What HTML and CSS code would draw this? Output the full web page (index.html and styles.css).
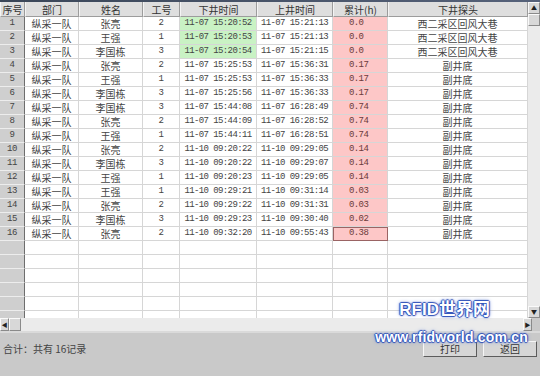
FILE: index.html
```html
<!DOCTYPE html>
<html lang="zh-CN">
<head>
    <meta charset="UTF-8">
    <title>下井记录查询</title>
    <link rel="stylesheet" href="styles.css">
</head>
<body>
<div class="window">
    <div class="title-edge"></div>

    <div class="grid-area">
        <div class="grid-view">
            <table class="record-table">
                <colgroup>
                    <col style="width:25px">
                    <col style="width:54px">
                    <col style="width:64px">
                    <col style="width:37px">
                    <col style="width:77px">
                    <col style="width:76px">
                    <col style="width:55px">
                    <col style="width:140px">
                </colgroup>
                <thead>
                    <tr>
                        <th>序号</th>
                        <th>部门</th>
                        <th>姓名</th>
                        <th>工号</th>
                        <th>下井时间</th>
                        <th>上井时间</th>
                        <th>累计(h)</th>
                        <th>下井探头</th>
                    </tr>
                </thead>
                <tbody>
                    <tr><td class="row-no">1</td><td>纵采一队</td><td>张亮</td><td class="num">2</td><td class="num time-in">11-07 15:20:52</td><td class="num">11-07 15:21:13</td><td class="num total">0.0</td><td>西二采区回风大巷</td></tr>
                    <tr><td class="row-no">2</td><td>纵采一队</td><td>王强</td><td class="num">1</td><td class="num time-in">11-07 15:20:53</td><td class="num">11-07 15:21:13</td><td class="num total">0.0</td><td>西二采区回风大巷</td></tr>
                    <tr><td class="row-no">3</td><td>纵采一队</td><td>李国栋</td><td class="num">3</td><td class="num time-in">11-07 15:20:54</td><td class="num">11-07 15:21:15</td><td class="num total">0.0</td><td>西二采区回风大巷</td></tr>
                    <tr><td class="row-no">4</td><td>纵采一队</td><td>张亮</td><td class="num">2</td><td class="num">11-07 15:25:53</td><td class="num">11-07 15:36:31</td><td class="num total">0.17</td><td>副井底</td></tr>
                    <tr><td class="row-no">5</td><td>纵采一队</td><td>王强</td><td class="num">1</td><td class="num">11-07 15:25:53</td><td class="num">11-07 15:36:33</td><td class="num total">0.17</td><td>副井底</td></tr>
                    <tr><td class="row-no">6</td><td>纵采一队</td><td>李国栋</td><td class="num">3</td><td class="num">11-07 15:25:56</td><td class="num">11-07 15:36:33</td><td class="num total">0.17</td><td>副井底</td></tr>
                    <tr><td class="row-no">7</td><td>纵采一队</td><td>李国栋</td><td class="num">3</td><td class="num">11-07 15:44:08</td><td class="num">11-07 16:28:49</td><td class="num total">0.74</td><td>副井底</td></tr>
                    <tr><td class="row-no">8</td><td>纵采一队</td><td>张亮</td><td class="num">2</td><td class="num">11-07 15:44:09</td><td class="num">11-07 16:28:52</td><td class="num total">0.74</td><td>副井底</td></tr>
                    <tr><td class="row-no">9</td><td>纵采一队</td><td>王强</td><td class="num">1</td><td class="num">11-07 15:44:11</td><td class="num">11-07 16:28:51</td><td class="num total">0.74</td><td>副井底</td></tr>
                    <tr><td class="row-no">10</td><td>纵采一队</td><td>张亮</td><td class="num">2</td><td class="num">11-10 09:20:22</td><td class="num">11-10 09:29:05</td><td class="num total">0.14</td><td>副井底</td></tr>
                    <tr><td class="row-no">11</td><td>纵采一队</td><td>李国栋</td><td class="num">3</td><td class="num">11-10 09:20:22</td><td class="num">11-10 09:29:07</td><td class="num total">0.14</td><td>副井底</td></tr>
                    <tr><td class="row-no">12</td><td>纵采一队</td><td>王强</td><td class="num">1</td><td class="num">11-10 09:20:23</td><td class="num">11-10 09:29:05</td><td class="num total">0.14</td><td>副井底</td></tr>
                    <tr><td class="row-no">13</td><td>纵采一队</td><td>王强</td><td class="num">1</td><td class="num">11-10 09:29:21</td><td class="num">11-10 09:31:14</td><td class="num total">0.03</td><td>副井底</td></tr>
                    <tr><td class="row-no">14</td><td>纵采一队</td><td>张亮</td><td class="num">2</td><td class="num">11-10 09:29:22</td><td class="num">11-10 09:31:31</td><td class="num total">0.03</td><td>副井底</td></tr>
                    <tr><td class="row-no">15</td><td>纵采一队</td><td>李国栋</td><td class="num">3</td><td class="num">11-10 09:29:23</td><td class="num">11-10 09:30:40</td><td class="num total">0.02</td><td>副井底</td></tr>
                    <tr><td class="row-no">16</td><td>纵采一队</td><td>张亮</td><td class="num">2</td><td class="num">11-10 09:32:20</td><td class="num">11-10 09:55:43</td><td class="num total current">0.38</td><td>副井底</td></tr>
                    <tr><td class="row-no"></td><td></td><td></td><td></td><td></td><td></td><td></td><td></td></tr>
                    <tr><td class="row-no"></td><td></td><td></td><td></td><td></td><td></td><td></td><td></td></tr>
                    <tr><td class="row-no"></td><td></td><td></td><td></td><td></td><td></td><td></td><td></td></tr>
                    <tr><td class="row-no"></td><td></td><td></td><td></td><td></td><td></td><td></td><td></td></tr>
                    <tr><td class="row-no"></td><td></td><td></td><td></td><td></td><td></td><td></td><td></td></tr>
                    <tr><td class="row-no"></td><td></td><td></td><td></td><td></td><td></td><td></td><td></td></tr>
                </tbody>
            </table>
        </div>

        <!-- vertical scrollbar -->
        <div class="vscroll">
            <div class="sb-btn">&#9650;</div>
            <div class="sb-thumb"></div>
            <div class="sb-track"></div>
            <div class="sb-btn">&#9660;</div>
        </div>
    </div>

    <!-- horizontal scrollbar -->
    <div class="hscroll">
        <div class="sb-btn">&#9664;</div>
        <div class="sb-thumb"></div>
        <div class="sb-track"></div>
        <div class="sb-btn">&#9654;</div>
        <div class="sb-corner"></div>
    </div>

    <div class="footer">
        <span class="summary">合计：共有 16记录</span>
        <button class="action-btn print-btn">打印</button>
        <button class="action-btn">返回</button>
    </div>

    <div class="watermark">
        <span class="wm-logo">RFID世界网</span>
        <span class="wm-url">www.rfidworld.com.cn</span>
    </div>
</div>
</body>
</html>
```

FILE: styles.css
```css
/* Global */
body {
    margin: 0;
    padding: 0;
    background-color: #c9c9c9;
    font-family: "Noto Sans CJK SC", "Liberation Sans", sans-serif;
    font-size: 10px;
    color: #444;
}

.window {
    position: relative;
    width: 540px;
    height: 376px;
    overflow: hidden;
    background-color: #c9c9c9;
}

.title-edge {
    height: 2px;
    background: linear-gradient(to right, #3a4658, #56627a);
}

/* Grid */
.grid-area {
    display: flex;
    height: 316px;
}

.grid-view {
    width: 528px;
    overflow: hidden;
    background-color: #fff;
}

.record-table {
    width: 528px;
    table-layout: fixed;
    border-collapse: separate;
    border-spacing: 0;
}

.record-table th {
    box-sizing: border-box;
    height: 15px;
    padding: 0;
    font-weight: normal;
    line-height: 13px;
    text-align: center;
    color: #333;
    background-color: #dedede;
    border-left: 1px solid #f4f4f4;
    border-right: 1px solid #9c9c9c;
    border-bottom: 1px solid #9c9c9c;
    white-space: nowrap;
    overflow: hidden;
}

.record-table td {
    box-sizing: border-box;
    height: 14px;
    padding: 0;
    line-height: 13px;
    text-align: center;
    border-right: 1px solid #d6d6d6;
    border-bottom: 1px solid #d6d6d6;
    white-space: nowrap;
    overflow: hidden;
}

.record-table td.num {
    font-family: "Liberation Mono", monospace;
    font-size: 9px;
    letter-spacing: -0.6px;
}

.record-table td.row-no {
    font-family: "Liberation Mono", monospace;
    font-size: 9px;
    letter-spacing: -0.5px;
    background-color: #cfcfcf;
    border-bottom: 1px solid #ededed;
    border-right: 1px solid #6e6e6e;
}

.record-table td.time-in {
    background-color: #c9f2c4;
}

.record-table td.total {
    text-align: left;
    padding-left: 16px;
    background-color: #fdc7c7;
    color: #6a3a3a;
}

.record-table td.current {
    outline: 1px solid #9a6464;
    outline-offset: -1px;
}

/* Scrollbars */
.vscroll {
    width: 12px;
    display: flex;
    flex-direction: column;
    background-color: #e9e9e9;
}

.sb-btn {
    box-sizing: border-box;
    width: 12px;
    height: 12px;
    font-size: 6px;
    line-height: 10px;
    text-align: center;
    color: #222;
    background-color: #d8d8d8;
    border: 1px solid;
    border-color: #fafafa #8a8a8a #8a8a8a #fafafa;
}

.vscroll .sb-thumb {
    height: 12px;
    box-sizing: border-box;
    background-color: #d8d8d8;
    border: 1px solid;
    border-color: #fafafa #8a8a8a #8a8a8a #fafafa;
}

.sb-track {
    flex: 1;
    background-color: #ebebeb;
}

.hscroll {
    display: flex;
    height: 13px;
    background-color: #ebebeb;
}

.hscroll .sb-btn {
    width: 9px;
    height: 13px;
    line-height: 11px;
}

.hscroll .sb-thumb {
    width: 12px;
    box-sizing: border-box;
    background-color: #d8d8d8;
    border: 1px solid;
    border-color: #fafafa #8a8a8a #8a8a8a #fafafa;
}

.sb-corner {
    width: 8px;
    background-color: #c9c9c9;
}

/* Footer */
.footer {
    display: flex;
    align-items: flex-start;
    height: 45px;
    padding: 8px 3px 0 3px;
    box-sizing: border-box;
    border-top: 2px solid #dadada;
}

.summary {
    line-height: 15px;
}

.action-btn {
    box-sizing: border-box;
    width: 54px;
    height: 16px;
    margin-left: 6px;
    padding: 0;
    font-family: "Noto Sans CJK SC", sans-serif;
    font-size: 10px;
    line-height: 12px;
    color: #333;
    background-color: #d6d6d6;
    border: 1px solid;
    border-color: #f6f6f6 #5c5c5c #5c5c5c #f6f6f6;
}

.print-btn {
    margin-left: auto;
}

/* Watermark over the grid corner */
.watermark {
    position: absolute;
    left: 368px;
    top: 300px;
    width: 160px;
    display: flex;
    flex-direction: column;
    align-items: flex-end;
    pointer-events: none;
}

.wm-logo,
.wm-url {
    color: #fff;
    font-family: "Liberation Sans", "Noto Sans CJK SC", sans-serif;
    font-weight: bold;
    text-shadow: 1px 0 1px #2c4fb8, -1px 0 1px #2c4fb8, 0 1px 1px #2c4fb8, 0 -1px 1px #2c4fb8, 0 0 4px #7c94dc;
}

.wm-logo {
    font-size: 17px;
    line-height: 20px;
    margin-right: 38px;
}

.wm-url {
    font-size: 14px;
    line-height: 16px;
    margin-top: 9px;
    letter-spacing: 0.2px;
}
```
